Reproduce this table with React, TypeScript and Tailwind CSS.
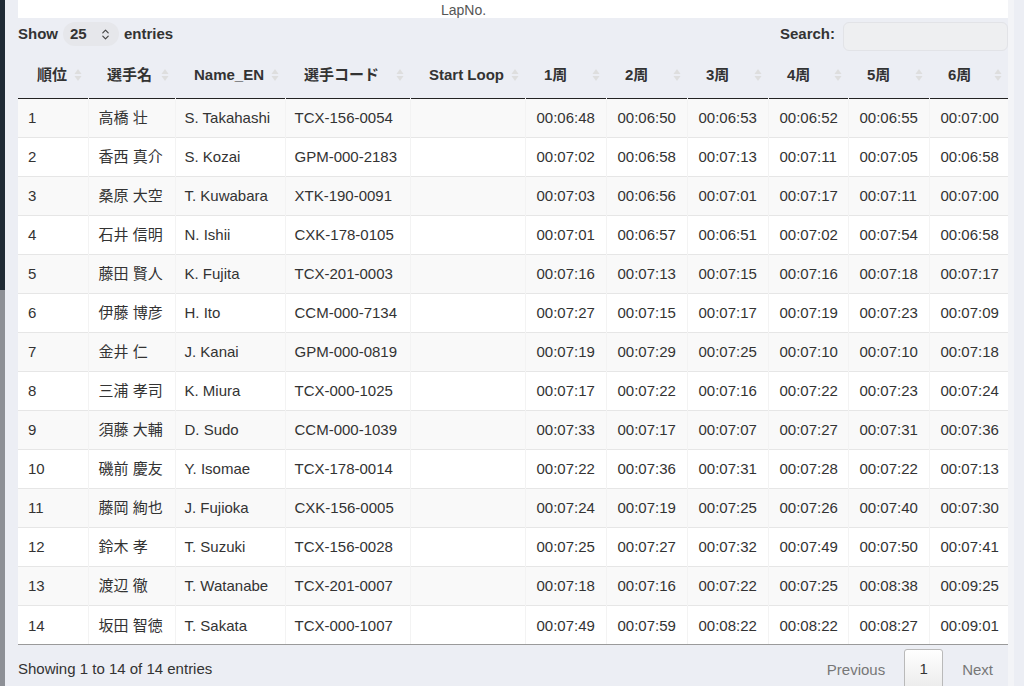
import { ChevronsUpDown } from "lucide-react";

const rows: [string, string, string, string, string[]][] = [
  ["1", "高橋 壮", "S. Takahashi", "TCX-156-0054", ["00:06:48", "00:06:50", "00:06:53", "00:06:52", "00:06:55", "00:07:00"]],
  ["2", "香西 真介", "S. Kozai", "GPM-000-2183", ["00:07:02", "00:06:58", "00:07:13", "00:07:11", "00:07:05", "00:06:58"]],
  ["3", "桑原 大空", "T. Kuwabara", "XTK-190-0091", ["00:07:03", "00:06:56", "00:07:01", "00:07:17", "00:07:11", "00:07:00"]],
  ["4", "石井 信明", "N. Ishii", "CXK-178-0105", ["00:07:01", "00:06:57", "00:06:51", "00:07:02", "00:07:54", "00:06:58"]],
  ["5", "藤田 賢人", "K. Fujita", "TCX-201-0003", ["00:07:16", "00:07:13", "00:07:15", "00:07:16", "00:07:18", "00:07:17"]],
  ["6", "伊藤 博彦", "H. Ito", "CCM-000-7134", ["00:07:27", "00:07:15", "00:07:17", "00:07:19", "00:07:23", "00:07:09"]],
  ["7", "金井 仁", "J. Kanai", "GPM-000-0819", ["00:07:19", "00:07:29", "00:07:25", "00:07:10", "00:07:10", "00:07:18"]],
  ["8", "三浦 孝司", "K. Miura", "TCX-000-1025", ["00:07:17", "00:07:22", "00:07:16", "00:07:22", "00:07:23", "00:07:24"]],
  ["9", "須藤 大輔", "D. Sudo", "CCM-000-1039", ["00:07:33", "00:07:17", "00:07:07", "00:07:27", "00:07:31", "00:07:36"]],
  ["10", "磯前 慶友", "Y. Isomae", "TCX-178-0014", ["00:07:22", "00:07:36", "00:07:31", "00:07:28", "00:07:22", "00:07:13"]],
  ["11", "藤岡 絢也", "J. Fujioka", "CXK-156-0005", ["00:07:24", "00:07:19", "00:07:25", "00:07:26", "00:07:40", "00:07:30"]],
  ["12", "鈴木 孝", "T. Suzuki", "TCX-156-0028", ["00:07:25", "00:07:27", "00:07:32", "00:07:49", "00:07:50", "00:07:41"]],
  ["13", "渡辺 徹", "T. Watanabe", "TCX-201-0007", ["00:07:18", "00:07:16", "00:07:22", "00:07:25", "00:08:38", "00:09:25"]],
  ["14", "坂田 智徳", "T. Sakata", "TCX-000-1007", ["00:07:49", "00:07:59", "00:08:22", "00:08:22", "00:08:27", "00:09:01"]],
];

const headers = ["順位", "選手名", "Name_EN", "選手コード", "Start Loop", "1周", "2周", "3周", "4周", "5周", "6周"];
const widths = [70, 87, 110, 125, 115, 81, 81, 81, 80, 81, 79];

function SortIcon() {
  return (
    <svg width="8" height="14" viewBox="0 0 8 14" className="absolute right-[6px] top-1/2 -translate-y-1/2">
      <path d="M4 1 L7.5 6 H0.5 Z" fill="#dedede" />
      <path d="M4 13 L7.5 8 H0.5 Z" fill="#dedede" />
    </svg>
  );
}

export default function App() {
  return (
    <div
      className="flex h-[686px] w-[1024px] overflow-hidden bg-[#eceef4] text-[15px] text-[#333]"
      style={{ fontFamily: '"Liberation Sans", "Noto Sans CJK JP", sans-serif' }}
    >
      <div className="flex w-[5px] shrink-0 flex-col">
        <div className="h-[290px] bg-[#1f2a35]" />
        <div className="flex-1 bg-[#8d9096]" />
      </div>

      <div className="ml-[13px] flex w-[990px] shrink-0 flex-col">
        <div className="h-[18px] shrink-0 overflow-hidden bg-white pl-[423px] text-[14px] leading-[20px] text-[#555]">
          LapNo.
        </div>

        <div className="flex h-[35px] shrink-0 items-center justify-between pb-[3px]">
          <div className="flex items-center font-bold">
            <span>Show</span>
            <div className="mx-[5px] flex h-[24px] w-[56px] items-center justify-between rounded-full bg-[#e6e7eb] px-[7px] font-bold">
              <span>25</span>
              <ChevronsUpDown size={13} strokeWidth={2.2} className="text-[#444]" />
            </div>
            <span>entries</span>
          </div>
          <div className="flex items-center font-bold">
            <span>Search:</span>
            <div className="ml-[8px] mt-[4px] h-[29px] w-[165px] rounded-[6px] border border-[#e2e3e7] bg-[#eeeff1]" />
          </div>
        </div>

        <table className="w-[990px] shrink-0 table-fixed border-collapse">
          <colgroup>
            {widths.map((w, i) => (
              <col key={i} style={{ width: w }} />
            ))}
          </colgroup>
          <thead>
            <tr className="border-b border-[#222]">
              {headers.map((h) => (
                <th key={h} className="relative h-[45px] pl-[19px] text-left font-bold">
                  {h}
                  <SortIcon />
                </th>
              ))}
            </tr>
          </thead>
          <tbody>
            {rows.map(([rank, name, en, code, laps], i) => (
              <tr
                key={rank}
                className={`border-t border-[#e6e6e6] ${i % 2 === 0 ? "bg-[#f9f9f9]" : "bg-white"}`}
              >
                <td className="h-[39px] border-r border-[#f3f3f3] pl-[10px] pt-[2px]">{rank}</td>
                <td className="border-r border-[#f3f3f3] pl-[10px] pt-[2px]">{name}</td>
                <td className="border-r border-[#f3f3f3] pl-[9px] pt-[2px]">{en}</td>
                <td className="border-r border-[#f3f3f3] pl-[9px] pt-[2px]">{code}</td>
                <td className="border-r border-[#f3f3f3]" />
                {laps.map((t, j) => (
                  <td key={j} className={`pl-[11px] pt-[2px] ${j < 5 ? "border-r border-[#f3f3f3]" : ""}`}>
                    {t}
                  </td>
                ))}
              </tr>
            ))}
          </tbody>
        </table>
        <div className="h-px shrink-0 bg-[#9a9a9a]" />

        <div className="flex flex-1 items-start justify-between">
          <div className="pt-[13px]">Showing 1 to 14 of 14 entries</div>
          <div className="flex items-start pt-[4px] pr-[15px] text-[#777]">
            <span className="pt-[10px]">Previous</span>
            <div className="ml-[19px] mr-[19px] flex h-[40px] w-[39px] items-center justify-center rounded-[3px] border border-[#b9b9b9] bg-gradient-to-b from-white to-[#ececec] text-[#333]">
              1
            </div>
            <span className="pt-[10px]">Next</span>
          </div>
        </div>
      </div>

      <div className="flex w-[16px] shrink-0 flex-col">
        <div className="h-full w-[6px] bg-[#f3f4f7]" />
      </div>
    </div>
  );
}
